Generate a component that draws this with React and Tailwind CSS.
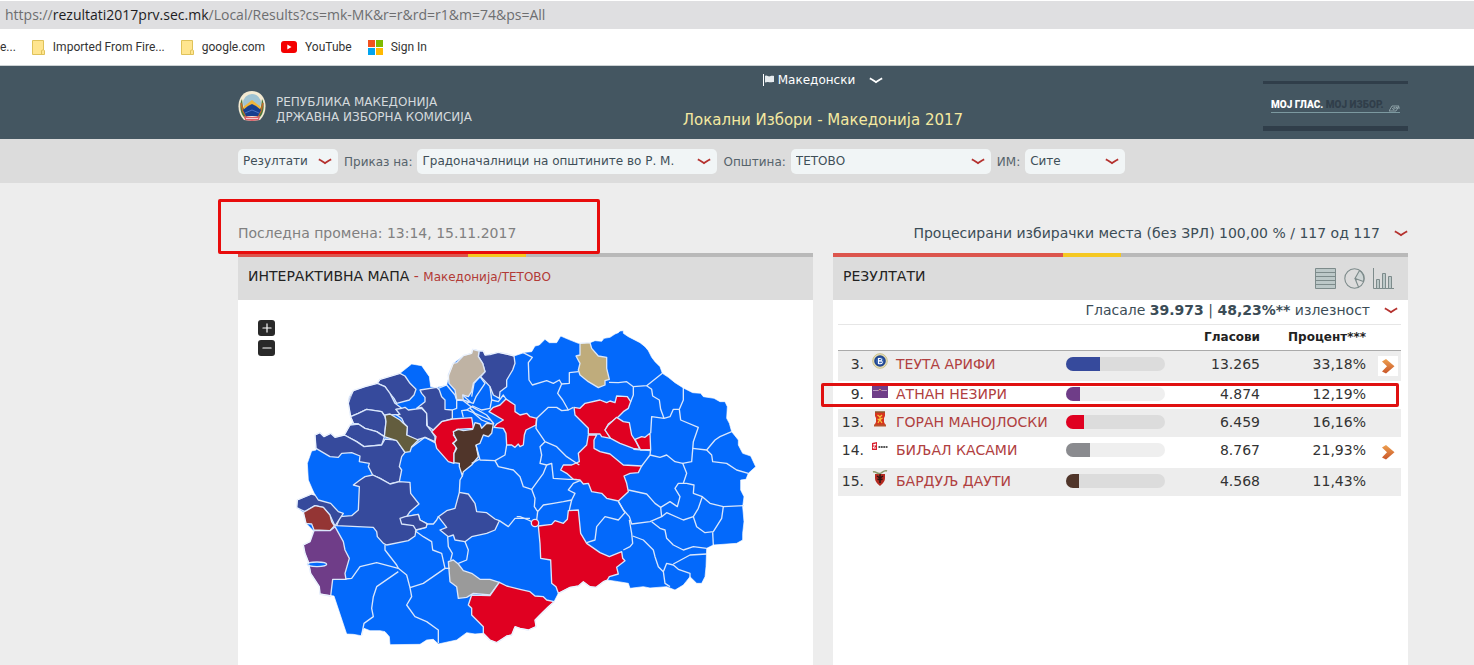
import { Minus, Plus } from 'lucide-react';

const candidates = [
  { no: 3, name: 'ТЕУТА АРИФИ', votes: '13.265', percent: '33,18%', share: 34, color: '#364a9c', logo: 'badge', more: true },
  { no: 9, name: 'АТНАН НЕЗИРИ', votes: '4.874', percent: '12,19%', share: 14, color: '#6f3d88', logo: 'purple', marked: true },
  { no: 13, name: 'ГОРАН МАНОЈЛОСКИ', votes: '6.459', percent: '16,16%', share: 18, color: '#e00021', logo: 'lion' },
  { no: 14, name: 'БИЉАЛ КАСАМИ', votes: '8.767', percent: '21,93%', share: 24, color: '#8a8b8f', logo: 'besa', more: true },
  { no: 15, name: 'БАРДУЉ ДАУТИ', votes: '4.568', percent: '11,43%', share: 13, color: '#50352a', logo: 'eagle' },
];

const COUNTRY =
  '52,430 65,393 78,390 75,345 90,338 102,350 122,340 135,352 163,345 180,315 190,308 182,290 175,250 190,212 225,200 262,190 270,178 330,160 365,132 395,137 418,170 422,200 440,202 470,195 477,165 490,130 520,107 545,100 548,88 580,93 585,105 625,97 672,108 690,102 705,97 725,95 735,78 748,75 765,58 778,68 800,68 812,48 835,58 865,70 900,68 915,62 935,64 942,55 960,52 975,42 985,38 990,33 1000,32 1000,40 1015,50 1050,68 1065,80 1075,92 1085,112 1095,125 1110,140 1117,160 1135,172 1155,188 1180,204 1208,218 1232,220 1240,230 1272,235 1290,245 1305,245 1312,260 1310,295 1318,310 1325,335 1345,360 1345,375 1358,400 1382,408 1397,440 1375,460 1368,478 1352,480 1352,510 1362,530 1358,560 1362,605 1358,640 1358,660 1340,670 1270,675 1250,685 1248,740 1245,770 1235,790 1220,790 1200,770 1188,785 1180,795 1155,810 1130,800 1080,804 1060,800 1020,805 1015,790 985,785 952,780 940,785 918,802 900,800 880,785 865,798 840,802 805,820 792,845 775,860 755,880 735,900 738,920 715,930 690,925 675,920 665,945 650,948 620,968 600,960 580,940 555,942 530,938 500,960 445,972 430,958 410,960 390,973 300,974 298,950 285,935 270,932 240,932 222,925 213,947 190,943 170,942 132,828 90,822 88,800 75,780 62,760 55,725 45,700 40,675 60,665 70,632 48,610 40,577 20,563 22,540 65,522 75,525 68,510 55,480';

const municipalities = [
  { fill: '#364a9c', points: '262,190 270,178 330,160 345,168 360,190 378,208 372,225 358,240 320,250 312,235 295,215 285,200' },
  { fill: '#364a9c', points: '182,290 175,250 178,232 190,212 225,200 262,190 285,200 300,220 315,250 335,265 318,268 330,283 300,285 285,288 275,275 230,268 205,280' },
  { fill: '#364a9c', points: '182,290 205,280 230,268 275,275 285,290 288,305 285,335 283,350 260,335 225,325 205,312 190,310' },
  { fill: '#364a9c', points: '163,345 180,315 205,312 225,325 260,335 283,350 275,375 222,380 200,365' },
  { fill: '#364a9c', points: '75,345 90,338 102,350 122,340 135,352 163,345 200,365 222,380 275,375 285,357 320,360 345,397 335,410 328,440 335,450 328,485 300,492 270,475 248,465 235,440 238,430 208,425 210,408 185,398 155,400 145,412 120,410 78,385' },
  { fill: '#364a9c', points: '335,265 345,262 355,270 395,265 410,280 410,315 425,335 435,350 435,368 405,352 380,360 350,345 352,320 342,310 335,295 320,285 330,283 318,268' },
  { fill: '#364a9c', points: '390,210 440,202 448,210 455,230 465,240 465,268 487,270 487,297 455,305 430,330 412,318 410,280 395,262 380,265 405,245 405,232 395,220' },
  { fill: '#364a9c', points: '567,93 580,93 585,105 600,104 625,97 650,102 672,108 675,130 668,150 650,180 650,200 630,215 628,235 610,225 600,200 572,170 585,155 578,130 565,110' },
  { fill: '#bfb3a4', points: '475,165 490,130 500,128 520,107 545,100 548,88 567,93 565,110 578,130 585,155 570,170 550,190 545,215 535,230 518,225 520,240 500,238 495,210 477,190' },
  { fill: '#635d3e', points: '285,285 300,282 330,300 340,310 352,320 350,345 385,360 365,380 360,395 345,397 320,362 283,350 288,305' },
  { fill: '#e00021', points: '425,335 455,305 487,297 545,293 548,310 550,325 500,328 490,345 500,360 488,370 500,380 492,400 492,430 475,425 440,385 435,365 438,350' },
  { fill: '#50352a', points: '492,345 490,335 505,328 520,332 548,328 555,308 570,312 575,325 590,310 610,312 605,340 595,350 580,345 570,370 558,375 565,410 545,435 520,455 517,468 508,440 508,430 492,428 492,400 500,385 490,370 500,360' },
  { fill: '#e00021', points: '597,275 610,262 630,255 648,237 675,255 675,275 690,285 710,280 720,290 740,295 738,315 708,330 703,345 700,375 690,380 685,372 675,382 665,375 650,375 648,340 640,325 612,322 620,312 640,300' },
  { fill: '#bfac7c', points: '870,70 900,68 905,85 925,108 950,112 950,145 958,178 945,182 945,195 925,203 895,185 870,165 865,150 870,130 858,108 870,105' },
  { fill: '#e00021', points: '852,262 870,265 885,250 930,240 950,248 960,243 975,248 980,228 1012,230 1022,245 1015,265 1000,275 985,290 965,305 955,312 945,330 962,355 935,350 930,342 895,342 895,325 855,285' },
  { fill: '#e00021', points: '980,292 1000,305 1018,308 1025,345 1038,365 1050,388 1030,385 990,370 962,355 945,330 955,315' },
  { fill: '#e00021', points: '1035,358 1055,350 1065,352 1080,340 1082,388 1052,390' },
  { fill: '#e00021', points: '895,345 920,345 912,360 912,385 930,395 960,402 1000,435 1055,438 1045,458 1020,460 1002,468 1010,490 1015,515 985,543 950,535 935,520 905,515 895,490 880,492 870,480 850,478 830,460 812,450 820,435 845,435 868,425 865,400 890,375' },
  { fill: '#364a9c', points: '248,465 270,475 300,492 328,485 360,487 362,520 387,552 360,575 350,590 385,583 390,600 410,610 408,622 378,630 375,648 355,662 290,675 280,670 262,650 260,635 250,622 140,617 150,590 185,587 205,570 208,500 190,495 210,480 225,470' },
  { fill: '#364a9c', points: '330,595 345,590 385,583 390,600 412,612 408,622 378,630 370,617 335,612' },
  { fill: '#364a9c', points: '20,563 22,540 65,522 75,525 85,540 122,550 145,575 160,580 150,595 135,618 122,590 100,562 75,557 45,575 35,570' },
  { fill: '#943534', points: '40,577 75,557 100,562 120,585 125,605 133,618 120,632 72,630 65,612 48,610' },
  { fill: '#6f3d88', points: '72,632 120,632 135,620 160,665 165,690 178,715 165,760 168,778 128,778 122,828 90,822 88,800 62,760 55,725 45,700 40,675 60,665' },
  { fill: '#364a9c', points: '508,517 535,522 555,550 560,575 590,578 615,597 628,602 615,630 590,640 545,650 525,665 495,660 490,645 475,650 450,630 470,622 445,590 470,572 495,565' },
  { fill: '#9a9a9a', points: '475,725 490,720 505,732 520,752 545,760 570,778 600,778 628,787 600,825 550,820 530,832 505,835 500,800 480,785' },
  { fill: '#e00021', points: '535,855 545,825 600,827 628,787 650,798 690,808 720,815 735,828 760,830 770,840 792,845 775,860 755,880 735,900 738,920 715,930 690,925 675,920 665,945 650,948 620,968 600,960 580,940 580,920 545,885 545,865' },
  { fill: '#e00021', points: '745,618 785,613 795,602 820,610 832,598 835,572 865,570 872,640 890,670 930,698 958,710 995,695 998,715 1005,722 980,742 985,762 958,770 952,780 940,785 918,802 900,800 880,785 865,798 840,802 805,820 798,800 785,790 782,720 752,715 750,670' },
];

const borders = [
  '487,270 500,265 500,240 520,242 545,262',
  '445,205 470,195 495,225 500,240',
  '545,230 552,190 570,170 585,190 558,230 550,250 520,240',
  '600,200 605,240 600,265 575,270 548,258 530,270 515,272 520,292',
  '605,240 625,245 640,225 650,240',
  '518,225 540,245 530,250',
  '545,260 590,285 612,312',
  '530,270 550,278 575,300 600,310',
  '540,265 555,280 600,300',
  '435,365 405,352 365,382',
  '558,375 570,420 615,422 645,405 650,375',
  '615,422 625,440 670,450 690,470 700,500 725,508 735,535 733,560 743,575 760,555 790,550 820,545 845,540 838,570',
  '567,418 545,430',
  '517,468 510,480 508,517',
  '698,97 727,112 715,128 717,180 727,195 770,182 790,190 808,180 815,192 838,190 838,158 865,155',
  '815,192 803,220 818,240 835,270 850,262',
  '835,270 815,272 800,262 775,262 740,295 738,325 765,365 800,380 830,410 868,435',
  '765,365 750,380 755,405 750,430 770,435 785,430 790,475 835,478 860,478',
  '770,435 760,460 725,508',
  '957,187 985,188 1010,185 1030,200 1030,225 1022,245',
  '1030,200 1070,197 1117,160',
  '1070,197 1085,208 1088,228 1108,240 1112,268 1122,295 1085,290 1082,340',
  '1122,295 1140,290 1150,268 1168,268 1180,240 1180,204',
  '1168,268 1172,300 1225,322 1210,365 1205,425 1178,430',
  '1208,385 1250,390 1275,360 1290,350 1325,335',
  '1250,390 1265,405 1268,425 1310,430 1340,450 1375,460',
  '1082,388 1080,405 1065,425 1055,438',
  '1030,388 1082,392',
  '1080,405 1110,412 1130,405 1155,425 1178,430 1190,460 1180,490',
  '1015,510 1070,522 1095,550 1112,562 1115,590 1080,605 1025,612 1018,590 1000,570 985,543',
  '985,545 1005,578 985,600 945,590 920,620 915,660 890,668',
  '1018,600 1025,640 1028,670 1020,680 1000,690',
  '1028,648 1060,660 1090,690 1095,710 1105,740 1120,755 1125,790 1140,800',
  '1120,755 1130,730 1150,735 1165,748 1200,760 1200,775',
  '1150,732 1200,705 1250,702',
  '1085,605 1110,625 1125,630 1130,655 1150,675 1180,690 1210,680 1250,685',
  '1115,590 1130,578 1180,600 1210,590 1225,565 1237,530 1210,520 1212,495 1190,490 1165,490 1155,505 1170,530 1162,560 1140,545 1112,562',
  '1237,530 1260,550 1300,560 1362,557',
  '1300,560 1295,595 1270,635 1245,638 1220,620 1210,590',
  '1268,637 1270,675',
  '743,575 740,600',
  '845,540 855,520 835,510 850,490 870,482',
  '720,595 675,595 655,620 628,602',
  '680,590 690,590 715,600 725,605',
  '408,612 430,612 440,600 445,590',
  '375,632 400,650 425,665 428,690 455,700 465,745 400,790 360,803 350,765 325,745 320,735 285,690 285,675',
  '473,650 475,680 487,700 482,720',
  '525,665 535,690 530,720 505,730',
  '166,777 185,775 210,740 260,728 325,745',
  '325,755 260,800 250,830 245,865 250,890 222,910 215,945',
  '360,803 365,830 350,855 375,890 410,905 445,930 445,970',
  '465,745 480,745',
];

const Chevron = ({ className = '' }) => (
  <svg viewBox="0 0 14 7" className={`h-[7px] w-[14px] ${className}`} fill="none" stroke="currentColor" strokeWidth="1.8" aria-hidden="true">
    <path d="M.8 1.4C3 2.2 5 4 7 5.2C9 4 11 2.2 13.200 1.4" />
  </svg>
);

const FolderIcon = () => (
  <svg viewBox="0 0 13 15" className="h-[15px] w-[13px]" aria-hidden="true">
    <path d="M.5.5h11v9.500l1 .5v4H.5z" fill="#ffe58f" stroke="#dfc25a" />
    <path d="M9.500 14v-3.500l2-.8" fill="none" stroke="#dfc25a" />
  </svg>
);

const Emblem = () => (
  <svg viewBox="0 0 28 32" className="h-[32px] w-[28px]" aria-hidden="true">
    <path d="M14 1C6 1 1 7 .5 15C.2 21 2 26 6 30l8 1l8-1c4-4 5.800-9 5.500-15C27 7 22 1 14 1z" fill="#f3ead2" />
    <path d="M4 9C1 14 2 24 7 28l4-3L5 17zM24 9c3 5 2 15-3 19l-4-3l6-8z" fill="#4d7a3a" />
    <path d="M3 13l2 8l3 5M25 13l-2 8l-3 5" stroke="#c3692c" strokeWidth="1.500" fill="none" />
    <circle cx="14" cy="13" r="9" fill="#9fc3d2" />
    <path d="M5 17l4-3l5-4l5 4l4 3l-2 4H7z" fill="#efb53a" />
    <path d="M5 20l5-4l4-2l4 2l5 4l-3 6H8z" fill="#173e8e" />
    <path d="M7 23l7-3l7 3" stroke="#4a72c4" fill="none" />
    <path d="M6 26l8 1l8-1l-1 4l-7 1l-7-1z" fill="#d9606a" />
    <path d="M8 28.500h12" stroke="#f4cfd0" />
  </svg>
);

const PartyLogo = ({ kind }) => (
  <svg viewBox="0 0 16 16" className="h-4 w-4" aria-hidden="true">
    {kind === 'badge' && (
      <>
        <circle cx="8" cy="8" r="7.300" fill="#e8e0b4" stroke="#c9c08c" strokeWidth="1" />
        <circle cx="8" cy="8" r="5.800" fill="#23478f" />
        <circle cx="8" cy="8" r="3.800" fill="#3c68b5" />
        <path d="M6.500 5v6M6.500 5.500h2a1.200 1.200 0 010 2.400h-2h2.500a1.400 1.400 0 010 2.800h-2.500" stroke="#fff" fill="none" />
      </>
    )}
    {kind === 'purple' && (
      <>
        <path d="M0 1h16v14H0z" fill="#6f3d88" />
        <path d="M1 7.500h5.500M9.500 7.500H15" stroke="#b898c6" />
        <path d="M6.500 7.500l1.500-1.500l1.500 1.500" stroke="#d99a62" fill="none" />
      </>
    )}
    {kind === 'lion' && (
      <>
        <path d="M3 1h10v4l-1 2v4l2 4H2l2-4V7L3 5z" fill="#d6341f" />
        <path d="M3 1h10" stroke="#8c5a2c" strokeWidth="1.500" />
        <path d="M5.500 4l2.500 2l2-2M8 5v4M5.500 8l2.500 1l2 3M8 8l-2 4M10.500 7l-3 2" stroke="#f7c73d" strokeWidth="1.200" fill="none" />
        <path d="M2 14.500h12" stroke="#b7522c" strokeWidth="2" />
      </>
    )}
    {kind === 'besa' && (
      <>
        <path d="M0 4l5-1v8H0z" fill="#d8202f" />
        <path d="M1 6l3-1l-3 4h3" stroke="#fff" fill="none" />
        <path d="M6.500 8h9" stroke="#555" strokeWidth="2" strokeDasharray="1.800 .6" />
      </>
    )}
    {kind === 'eagle' && (
      <>
        <path d="M3 4h10v4c0 4-3 6-5 8c-2-2-5-4-5-8z" fill="#b42a20" />
        <path d="M8 4v9M5 6l3 2l3-2M5.500 9l2.500 1l2.500-1" stroke="#2b1512" strokeWidth="1.500" fill="none" />
        <path d="M1 2c3-1 5 3 8 1s4-3 6-2" stroke="#8a9a6b" strokeWidth="1.500" fill="none" />
      </>
    )}
  </svg>
);

const ArrowIcon = () => (
  <svg viewBox="0 0 20 20" className="h-5 w-5 bg-white" aria-hidden="true">
    <defs>
      <linearGradient id="arrow" x1="0" y1="0" x2="0" y2="1">
        <stop offset="0" stopColor="#eda04f" />
        <stop offset="1" stopColor="#c9562a" />
      </linearGradient>
    </defs>
    <path d="M4 5.500L8 3l8.500 7.200L8 17.500L4 15.500l5-5.300z" fill="url(#arrow)" />
  </svg>
);

const FilterSelect = ({ label, id, value, width }) => (
  <div className="flex items-center gap-[5px]">
    {label && <label htmlFor={id} className="pt-[2px]">{label}</label>}
    <div className={`relative ${width}`}>
      <select id={id} aria-label={label || value} className="block h-[25px] w-full appearance-none rounded-[5px] bg-[#f1f5f6] pl-[5px] pr-6 text-xs text-[#3f4f58]">
        <option>{value}</option>
      </select>
      <Chevron className="pointer-events-none absolute right-[6px] top-[9px] text-[#b5322f]" />
    </div>
  </div>
);

const Stripe = () => (
  <div className="flex h-1 bg-[#b9b9b9]">
    <div className="w-2/5 bg-[#dc554d]" />
    <div className="w-1/10 bg-[#f5c822]" />
  </div>
);

const BrowserChrome = () => (
  <div>
    <div className="flex h-[29px] items-center border-t border-white bg-[#dfdfe1] pl-[5px] font-['Open_Sans',sans-serif] text-sm text-[#6d6e70]">
      <span>
        https://<span className="text-[#1d1d1f]">rezultati2017prv.sec.mk</span>/Local/Results?cs=mk-MK&amp;r=r&amp;rd=r1&amp;m=74&amp;ps=All
      </span>
    </div>
    <nav className="flex h-[37px] items-center gap-4 border-b border-[#ccd2d4] bg-white font-[Roboto,sans-serif] text-xs text-[#333]">
      <a href="#more">e...</a>
      <a href="#imported" className="flex items-center gap-2"><FolderIcon />Imported From Fire...</a>
      <a href="#google" className="flex items-center gap-2"><FolderIcon />google.com</a>
      <a href="#youtube" className="flex items-center gap-2">
        <svg viewBox="0 0 16 12" className="h-3 w-4" aria-hidden="true">
          <rect width="16" height="12" rx="3" fill="#f40000" />
          <path d="M6.300 3.500v5L10.500 6z" fill="#fff" />
        </svg>
        YouTube
      </a>
      <a href="#signin" className="flex items-center gap-2">
        <svg viewBox="0 0 15 15" className="h-[15px] w-[15px]" aria-hidden="true">
          <path d="M0 0h7v7H0z" fill="#f2511f" />
          <path d="M8 0h7v7H8z" fill="#7fba00" />
          <path d="M0 8h7v7H0z" fill="#01a4ef" />
          <path d="M8 8h7v7H8z" fill="#ffb901" />
        </svg>
        Sign In
      </a>
    </nav>
  </div>
);

const SiteHeader = () => (
  <header className="grid h-[73px] grid-cols-[1fr_auto_1fr] bg-[#445661] pl-[238px] pr-[66px]">
    <a href="#home" className="flex items-center gap-[10px] pt-[6px] text-xs leading-[15px] text-[#d5dadd]">
      <Emblem />
      <span className="pt-2">РЕПУБЛИКА МАКЕДОНИЈА<br />ДРЖАВНА ИЗБОРНА КОМИСИЈА</span>
    </a>
    <div className="flex flex-col items-center">
      <button className="flex h-7 items-center text-xs text-white">
        <svg viewBox="0 0 12 12" className="mr-[3px] h-3 w-3" aria-hidden="true">
          <path d="M.5 0v12" stroke="#fff" />
          <path d="M2 2c2-1.500 3 1 5 .3c1.500-.6 3-.5 4-.3v6c-2-.5-3 .8-5 .2c-1.500-.5-2.500-.2-4 .3z" fill="#e6ebee" />
        </svg>
        Македонски
        <Chevron className="ml-[14px]" />
      </button>
      <h1 className="mt-[14px] text-[15px] leading-6 text-[#f5e9a0]">Локални Избори - Македонија 2017</h1>
    </div>
    <div className="mb-2 mt-[15px] flex w-[145px] items-center justify-self-end border-b-[5px] border-t-[3px] border-[#303e4a] px-2">
      <div className="flex w-full items-center justify-between border-b border-[#7c99a0] font-[Roboto,sans-serif] text-[10px] font-black leading-[14px] whitespace-nowrap text-white">
        <span>МОЈ ГЛАС. <span className="text-[#303e4a]">МОЈ ИЗБОР.</span></span>
        <svg viewBox="0 0 11 7" className="mt-2 h-[7px] w-[11px]" fill="none" stroke="#9fb2b8" strokeWidth=".8" aria-hidden="true">
          <path d="M0 6L3 1l7 0l-3 5zM3 4l3-2M4 5l4-3M7 3l4 0" />
        </svg>
      </div>
    </div>
  </header>
);

const RegionMap = () => (
  <svg viewBox="0 0 1410 990" className="ml-[52px] block w-[470px]" strokeLinejoin="round" role="img" aria-label="Мапа">
    <polygon points={COUNTRY} fill="#0369fb" />
    <g stroke="#d9e6fb" strokeWidth="4">
      {municipalities.map((m) => (
        <polygon key={m.points} points={m.points} fill={m.fill} />
      ))}
      <circle cx="735" cy="609" r="11" fill="#e00021" />
      <ellipse cx="81" cy="733" rx="29" ry="7" fill="#0369fb" />
      {borders.map((points) => (
        <polyline key={points} points={points} fill="none" />
      ))}
    </g>
    <polygon points={COUNTRY} fill="none" stroke="#fff" strokeWidth="2" />
  </svg>
);

const MapPanel = () => (
  <section className="min-h-[412px] bg-white">
    <Stripe />
    <h2 className="h-[43px] bg-[#dcdcdc] pl-[10px] text-sm leading-[38px] text-[#222]">
      ИНТЕРАКТИВНА МАПА <span className="text-[#b23a36]">- <span className="text-xs">Македонија/ТЕТОВО</span></span>
    </h2>
    <div className="relative pt-5">
      <div className="absolute left-5 top-5 flex flex-col gap-1">
        <button aria-label="Зголеми" className="flex h-4 w-[17px] items-center justify-center rounded-[3px] bg-[#292929] text-white">
          <Plus size={14} />
        </button>
        <button aria-label="Намали" className="flex h-4 w-[17px] items-center justify-center rounded-[3px] bg-[#292929] text-white">
          <Minus size={14} />
        </button>
      </div>
      <RegionMap />
    </div>
  </section>
);

const ResultsTable = () => (
  <table className="w-full table-fixed border-collapse text-sm text-[#333]">
    <colgroup>
      <col className="w-[34px]" />
      <col className="w-[24px]" />
      <col />
      <col className="w-[99px]" />
      <col className="w-[95px]" />
      <col className="w-[106px]" />
      <col className="w-[35px]" />
    </colgroup>
    <thead>
      <tr className="h-[25px] border-b border-[#aaa] text-xs text-[#222]">
        <th colSpan={4} />
        <th className="text-right">Гласови</th>
        <th className="text-right">Процент***</th>
        <th />
      </tr>
    </thead>
    <tbody>
      {candidates.map((c) => (
        <tr key={c.no} className={`group align-top leading-[27px] odd:bg-[#ededed] ${c.more ? 'h-[31px]' : 'h-7'}`}>
          <td className="relative pr-2 text-right">
            {c.no}.
            {c.marked && (
              <div className="pointer-events-none absolute -left-[17px] top-[2px] z-10 h-[24px] w-[578px] rounded-[2px] border-[3px] border-[#e01010]" />
            )}
          </td>
          <td className="pt-[2px]"><PartyLogo kind={c.logo} /></td>
          <td className="whitespace-nowrap">
            <a href={`#kandidat-${c.no}`} className="text-[#b04040]">{c.name}</a>
          </td>
          <td className="pt-[6px]">
            <div className="h-[14px] overflow-hidden rounded-full bg-[#efefef] group-odd:bg-[#dcdcdc]">
              <div className="h-full" style={{ width: `${c.share}%`, backgroundColor: c.color }} />
            </div>
          </td>
          <td className="text-right">{c.votes}</td>
          <td className="text-right">{c.percent}</td>
          <td className="pl-[12px] pt-[5px]">
            {c.more && <a href={`#detali-${c.no}`} aria-label={c.name} className="block"><ArrowIcon /></a>}
          </td>
        </tr>
      ))}
    </tbody>
  </table>
);

const ResultsPanel = () => (
  <section className="min-h-[412px] bg-white">
    <Stripe />
    <div className="flex h-[43px] justify-between bg-[#dcdcdc] pl-[10px] pr-[14px]">
      <h2 className="text-sm leading-[38px] text-[#222]">РЕЗУЛТАТИ</h2>
      <div className="flex gap-2 pt-[11px] text-[#7d8b8b]">
        <button aria-label="Табела" className="h-[21px] w-[21px]">
          <svg viewBox="0 0 21 21" fill="#bcc8c8" stroke="currentColor">
            <path d="M.5.5h20v20H.5zM.5 4.500h20M.5 8.500h20M.5 12.500h20M.5 16.500h20" />
          </svg>
        </button>
        <button aria-label="Пита" className="h-[21px] w-[21px]">
          <svg viewBox="0 0 21 21" fill="none" stroke="currentColor" strokeWidth="1.100">
            <circle cx="10.500" cy="10.500" r="9.700" />
            <path d="M15.500 2.500L11 10.500L19.500 13.500C20.500 9 19 5 15.500 2.500z" fill="#cfd6d6" />
            <path d="M11 10.500L14.500 19M11 10.500L13 12" />
          </svg>
        </button>
        <button aria-label="Графикон" className="h-[21px] w-[21px]">
          <svg viewBox="0 0 21 21" fill="#bcc8c8" stroke="currentColor">
            <path d="M.5 0v20.500H21" fill="none" />
            <path d="M3.500 11.500h3v9h-3zM9.500 5.500h3v15h-3zM15.500 8.500h3v12h-3z" />
          </svg>
        </button>
      </div>
    </div>
    <div className="pl-[5px] pr-[7px]">
      <button className="flex h-[25px] w-full items-center justify-end border-b border-[#e6e6e6] pb-1 text-sm text-[#3b4c56]">
        <span>Гласале <b>39.973</b> | <b>48,23%**</b> излезност</span>
        <Chevron className="ml-[14px] mr-[3px] text-[#b5322f]" />
      </button>
      <ResultsTable />
    </div>
  </section>
);

const App = () => (
  <div className="min-h-screen overflow-x-hidden bg-[#ededed] font-['DejaVu_Sans',Verdana,sans-serif]">
    <BrowserChrome />
    <SiteHeader />
    <form className="flex h-11 items-center gap-[6px] bg-[#dcdcdc] pl-[238px] text-xs text-[#56636b]">
      <FilterSelect id="view" value="Резултати" width="w-[100px]" />
      <FilterSelect id="type" label="Приказ на:" value="Градоначалници на општините во Р. М." width="w-[300px]" />
      <FilterSelect id="town" label="Општина:" value="ТЕТОВО" width="w-[200px]" />
      <FilterSelect id="station" label="ИМ:" value="Сите" width="w-[100px]" />
    </form>
    <main className="pl-[238px] pr-[66px]">
      <div className="relative flex h-[70px] items-center justify-between pt-[30px] text-sm">
        <p className="text-[#808080]">Последна промена: 13:14, 15.11.2017</p>
        <button className="flex items-center text-[#3b4c56]">
          Процесирани избирачки места (без ЗРЛ) 100,00 % / 117 од 117
          <Chevron className="ml-[14px] text-[#b5322f]" />
        </button>
        <div className="pointer-events-none absolute -left-5 top-4 z-10 h-[55px] w-[382px] rounded-[2px] border-[3px] border-[#e80c0c]" />
      </div>
      <div className="grid grid-cols-2 gap-5">
        <MapPanel />
        <ResultsPanel />
      </div>
    </main>
  </div>
);

export default App;
